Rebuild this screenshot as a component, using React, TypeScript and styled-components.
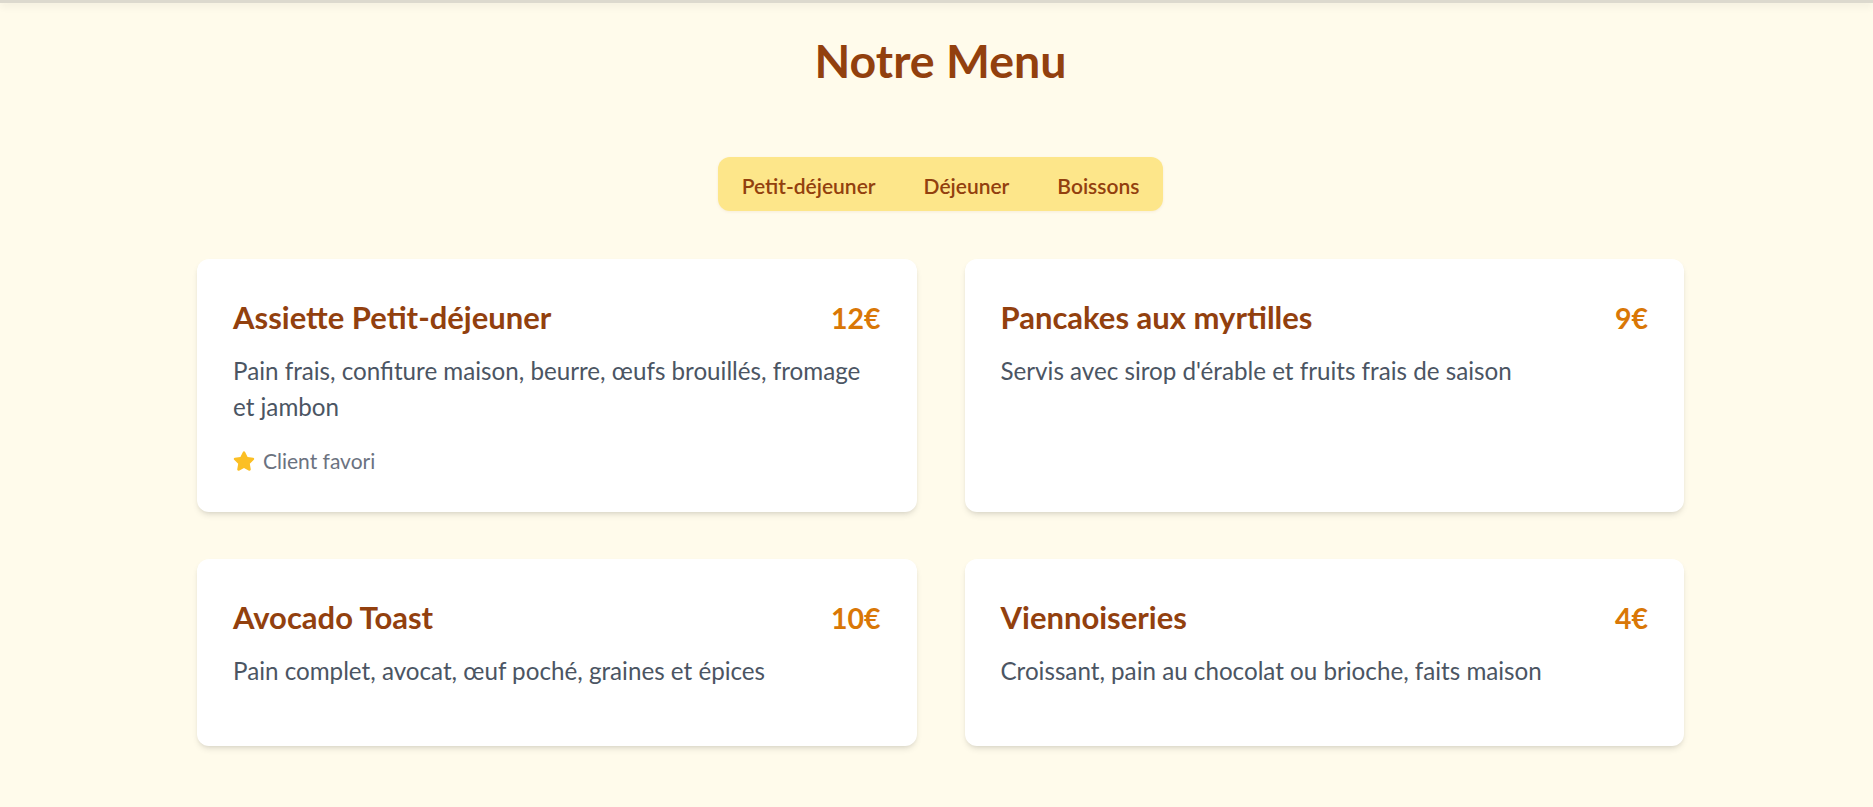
import React from "react";
import styled, { createGlobalStyle } from "styled-components";
import { FaStar } from "react-icons/fa";

const GlobalStyle = createGlobalStyle`
  * { box-sizing: border-box; }
  html, body { margin: 0; padding: 0; }
  body {
    background: #fffbeb;
    font-family: Lato, "Open Sans", sans-serif;
  }
`;

const TopBar = styled.div`
  height: 3px;
  background: #dcd9ce;
  box-shadow: 0 2px 8px rgba(0, 0, 0, 0.12);
`;

const Page = styled.main`
  padding: 0 0 48px 8px;
  display: flex;
  flex-direction: column;
  align-items: center;
`;

const Title = styled.h1`
  margin: 30px 0 0;
  font-size: 46.5px;
  line-height: 55px;
  font-weight: 700;
  color: #92400e;
  text-align: center;
`;

const Tabs = styled.nav`
  margin-top: 69px;
  display: flex;
  gap: 8px;
  padding: 4px;
  background: #fde68a;
  border-radius: 12px;
  box-shadow: 0 1px 3px rgba(146, 64, 14, 0.08);
`;

const Tab = styled.button`
  height: 46px;
  padding: 2px 20px 0;
  border: none;
  background: transparent;
  border-radius: 9px;
  font-family: inherit;
  font-size: 21px;
  font-weight: 600;
  color: #92400e;
  cursor: pointer;
`;

const Grid = styled.section`
  margin-top: 48px;
  width: 1487px;
  display: grid;
  grid-template-columns: 1fr 1fr;
  gap: 47px 48px;
`;

const Card = styled.article`
  background: #ffffff;
  border-radius: 12px;
  padding: 36px;
  box-shadow: 0 4px 6px -1px rgba(0, 0, 0, 0.1), 0 2px 4px -2px rgba(0, 0, 0, 0.1);
`;

const CardHead = styled.div`
  display: flex;
  justify-content: space-between;
  align-items: baseline;
`;

const ItemName = styled.h2`
  margin: 0;
  font-size: 31px;
  line-height: 44px;
  font-weight: 700;
  color: #92400e;
`;

const Price = styled.span`
  font-size: 28.5px;
  line-height: 44px;
  font-weight: 700;
  color: #d97706;
`;

const Description = styled.p`
  margin: 13px 0 21.5px;
  font-size: 24.2px;
  line-height: 35.75px;
  color: #4b5563;
`;

const Badge = styled.div`
  display: flex;
  align-items: center;
  gap: 8px;
  font-size: 21px;
  line-height: 30px;
  color: #6b7280;

  svg {
    color: #fbbf24;
    flex: none;
  }
`;

type Item = { name: string; price: string; description: string; favorite?: boolean };

const items: Item[] = [
  {
    name: "Assiette Petit-déjeuner",
    price: "12€",
    description: "Pain frais, confiture maison, beurre, œufs brouillés, fromage et jambon",
    favorite: true,
  },
  {
    name: "Pancakes aux myrtilles",
    price: "9€",
    description: "Servis avec sirop d'érable et fruits frais de saison",
  },
  {
    name: "Avocado Toast",
    price: "10€",
    description: "Pain complet, avocat, œuf poché, graines et épices",
  },
  {
    name: "Viennoiseries",
    price: "4€",
    description: "Croissant, pain au chocolat ou brioche, faits maison",
  },
];

export default function App() {
  return (
    <>
      <GlobalStyle />
      <TopBar />
      <Page>
        <Title>Notre Menu</Title>
        <Tabs>
          <Tab>Petit-déjeuner</Tab>
          <Tab>Déjeuner</Tab>
          <Tab>Boissons</Tab>
        </Tabs>
        <Grid>
          {items.map((item) => (
            <Card key={item.name}>
              <CardHead>
                <ItemName>{item.name}</ItemName>
                <Price>{item.price}</Price>
              </CardHead>
              <Description>{item.description}</Description>
              {item.favorite && (
                <Badge>
                  <FaStar size={22} />
                  Client favori
                </Badge>
              )}
            </Card>
          ))}
        </Grid>
      </Page>
    </>
  );
}
